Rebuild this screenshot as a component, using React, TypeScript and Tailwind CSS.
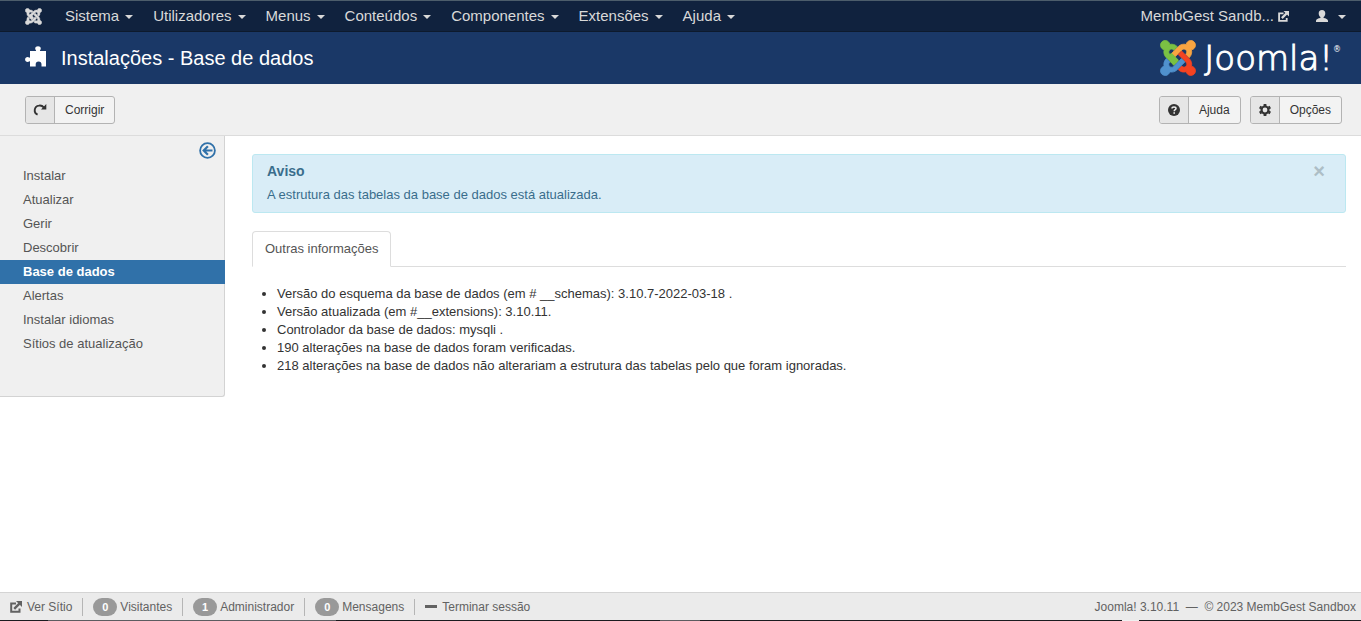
import React from "react";

const menus = [
  "Sistema",
  "Utilizadores",
  "Menus",
  "Conteúdos",
  "Componentes",
  "Extensões",
  "Ajuda",
];

const sidebarLinks = [
  "Instalar",
  "Atualizar",
  "Gerir",
  "Descobrir",
  "Base de dados",
  "Alertas",
  "Instalar idiomas",
  "Sítios de atualização",
];

const details = [
  "Versão do esquema da base de dados (em # __schemas): 3.10.7-2022-03-18 .",
  "Versão atualizada (em #__extensions): 3.10.11.",
  "Controlador da base de dados: mysqli .",
  "190 alterações na base de dados foram verificadas.",
  "218 alterações na base de dados não alterariam a estrutura das tabelas pelo que foram ignoradas.",
];

const counters = [
  { count: 0, label: "Visitantes" },
  { count: 1, label: "Administrador" },
  { count: 0, label: "Mensagens" },
];

type MarkProps = { className: string; colors: string[] };

const JoomlaMark = ({ className, colors }: MarkProps) => (
  <svg viewBox="-6 26 460 460" className={className} strokeWidth="10" aria-hidden="true">
    <path
      fill={colors[0]}
      stroke={colors[0]}
      d="M.6 92.1C.6 58.8 27.4 32 60.4 32c30 0 54.5 21.9 59.2 50.2 32.6-7.6 67.1.6 96.5 30l-44.3 44.3c-20.5-20.5-42.6-16.3-55.4-3.5-14.3 14.3-14.3 37.9 0 52.2l99.5 99.5-44 44.3c-87.7-87.2-49.7-49.7-99.8-99.7-26.8-26.5-35-64.8-24.8-98.9C20.4 144.6.6 120.7.6 92.1z"
    />
    <path
      fill={colors[1]}
      stroke={colors[1]}
      d="M130.1 208.5l44.3 44.3c10-10 89.7-89.7 99.7-99.8 14.3-14.3 37.6-14.3 51.9 0 12.8 12.8 17 35-3.5 55.4l44 44.3c31.2-31.2 38.5-67.6 28.9-101.2 29.2-4.1 51.9-29.2 51.9-59.5 0-33.2-26.8-60.1-59.8-60.1-30.3 0-55.4 22.5-59.5 51.6-33.8-9.9-71.7-1.5-98.3 25.1-18.3 19.1-71.1 71.5-99.6 99.9z"
    />
    <path
      fill={colors[2]}
      stroke={colors[2]}
      d="M396.4 360.7c8.2-32.7-.9-68.5-26.3-93.9-11.8-12.2 5 4.7-99.5-99.7l-44.3 44.3 99.7 99.7c14.3 14.3 14.3 37.6 0 51.9-12.8 12.8-35 17-55.4-3.5l-44 44.3c27.6 30.2 68 38.8 102.7 28 5.5 27.4 29.7 48.1 58.9 48.1 33 0 59.8-26.8 59.8-60.1 0-30.2-22.5-55-51.6-59.1z"
    />
    <path
      fill={colors[3]}
      stroke={colors[3]}
      d="M312.1 307.6l-44-44.3c-87 86.4-50.4 50.4-99.7 99.8-14.3 14.3-37.6 14.3-51.9 0-13.1-13.4-16.9-35.3 3.2-55.4l-44-44.3c-30.2 30.2-38 65.2-29.5 98.3-26.7 6-46.2 29.9-46.2 58.2C0 453.2 26.8 480 59.8 480c28.6 0 52.5-19.8 58.6-46.7 32.7 8.2 68.5-.6 94.2-26 32.1-32 12.2-12.4 99.5-99.7z"
    />
    {/* green arm crosses back over the orange one */}
    <path d="M120 209l96 96" stroke={colors[0]} strokeWidth="58" fill="none" />
  </svg>
);

const PuzzleIcon = () => (
  <svg viewBox="0 0 22 21" className="mb-1 h-[21px] w-[22px]" fill="#fff" aria-hidden="true">
    <path d="M5 5h5.500c.5 0 .7-.4.5-.8-.5-.5-.8-.9-.8-1.600C10.200 1 11.500.2 13 .2s2.800.8 2.800 2.400c0 .7-.3 1.100-.8 1.600-.2.400 0 .8.5.8H21v15.500h-4.500v-2.200c0-1.700-1-2.800-2.900-2.800s-2.900 1.100-2.900 2.800v2.200H5v-4.700c0-.5-.5-.6-.9-.3-.4.300-.9.500-1.400.5C1.100 16 .1 14.900.1 13.500S1.100 11 2.700 11c.5 0 1 .2 1.400.5.400.3.900.2.900-.3z" />
  </svg>
);

const ExternalIcon = ({ className }: { className: string }) => (
  <svg viewBox="0 0 12 12" className={className} fill="none" stroke="currentColor" aria-hidden="true">
    <path strokeWidth="2" d="M6 2.500H1.200v8.300h8.300V7.500" />
    <path strokeWidth="2.400" d="M4.200 7.800l5.200-5.200" />
    <path fill="currentColor" stroke="none" d="M6 0h6v6z" />
  </svg>
);

const UserIcon = () => (
  <svg viewBox="0 0 12 12" className="size-3" fill="currentColor" aria-hidden="true">
    <path d="M6 0c2.200 0 3.300 1.400 3.300 3.400 0 1.500-.7 2.900-1.700 3.600v1c2.300.3 4.400 1.200 4.400 2.700V12H0v-1.300C0 9.200 2.100 8.300 4.400 8V7C3.400 6.300 2.700 4.900 2.700 3.400 2.700 1.400 3.800 0 6 0z" />
  </svg>
);

const RefreshIcon = () => (
  <svg viewBox="0 0 14 14" className="size-3.5" aria-hidden="true">
    <path d="M4.600 11.600A4.700 4.700 0 0 1 5.900 2.600Q8.800 2 11 4.600" fill="none" stroke="#333" strokeWidth="1.900" />
    <path d="M13.300 1v5.500H8z" fill="#333" />
  </svg>
);

const HelpIcon = () => (
  <svg viewBox="0 0 12 12" className="size-3" aria-hidden="true">
    <circle cx="6" cy="6" r="6" fill="#333" />
    <path d="M4 4.600C4 2.600 8 2.600 8 4.600 8 5.800 6.200 5.700 6.200 7.200" fill="none" stroke="#eee" strokeWidth="1.500" />
    <path d="M5.400 8.200h1.600v1.500H5.400z" fill="#eee" />
  </svg>
);

const GearIcon = () => (
  <svg viewBox="0 0 12 12" className="size-3" aria-hidden="true">
    <circle cx="6" cy="6" r="3.500" fill="none" stroke="#333" strokeWidth="2.200" />
    <path
      d="M6 0v2M6 10v2M.7 3l1.700 1M9.600 8l1.700 1M.7 9l1.700-1M9.600 4l1.700-1"
      stroke="#333"
      strokeWidth="2.800"
    />
  </svg>
);

const CollapseIcon = () => (
  <svg viewBox="0 0 17 17" className="size-[17px]" fill="none" stroke="#3071a9" aria-hidden="true">
    <circle cx="8.500" cy="8.500" r="7.400" strokeWidth="1.800" />
    <path d="M13.500 8.500H5M8.900 4.300L4.700 8.500l4.200 4.200" strokeWidth="2.200" />
  </svg>
);

const Caret = () => (
  <span className="mt-0.5 border-x-4 border-t-4 border-x-transparent border-t-current" />
);

type ToolButtonProps = { icon: React.ReactNode; label: string };

const ToolButton = ({ icon, label }: ToolButtonProps) => (
  <button
    type="button"
    className="flex h-7 overflow-hidden rounded-[3px] border border-[#b3b3b3] bg-[#f3f3f3] text-xs text-[#333]"
  >
    <span className="flex h-full w-[29px] items-center justify-center border-r border-[#b3b3b3] bg-[#e6e6e6]">
      {icon}
    </span>
    <span className="flex h-full items-center px-2.5">{label}</span>
  </button>
);

const Navbar = () => (
  <nav className="flex h-8 items-center border-t border-b border-t-[#4c5d6b] border-b-[#0d1a2d] bg-[#10223e] pr-[15px] pl-[25px] text-[15px] text-[#d9d9d9]">
    <a href="#" aria-label="Joomla" className="mr-[23px]">
      <JoomlaMark className="size-[17px]" colors={["#d9d9d9", "#d9d9d9", "#d9d9d9", "#d9d9d9"]} />
    </a>
    <div className="flex gap-5">
      {menus.map((menu) => (
        <a key={menu} href="#" className="flex items-center gap-1.5">
          {menu}
          <Caret />
        </a>
      ))}
    </div>
    <div className="ml-auto flex items-center">
      <a href="#" className="flex items-center gap-1">
        MembGest Sandb...
        <ExternalIcon className="size-[11px]" />
      </a>
      <a href="#" aria-label="Utilizador" className="ml-[27px] flex items-center gap-2.5">
        <UserIcon />
        <Caret />
      </a>
    </div>
  </nav>
);

const Header = () => (
  <header className="flex h-13 items-center bg-[#1a3867] pr-5 pl-[25px] text-white">
    <PuzzleIcon />
    <h1 className="ml-3.5 text-xl">Instalações - Base de dados</h1>
    <div className="ml-auto flex items-center gap-2">
      <JoomlaMark className="size-9" colors={["#7ac143", "#f9a541", "#f44321", "#5091cd"]} />
      <div className="flex items-start font-['DejaVu_Sans',sans-serif]">
        <span className="text-[34px] leading-9 font-extralight [-webkit-text-stroke:1px_white]">
          Joomla!
        </span>
        <span className="text-[8px] leading-5">®</span>
      </div>
    </div>
  </header>
);

const Sidebar = () => (
  <aside className="w-[225px] shrink-0 self-start rounded-br-[3px] border-r border-b border-[#d3d3d3] bg-[#f0f0f0] pb-10">
    <div className="flex justify-end pt-1.5 pr-2">
      <button type="button" aria-label="Ocultar barra lateral" className="h-[17px]">
        <CollapseIcon />
      </button>
    </div>
    <ul className="mt-[5px]">
      {sidebarLinks.map((link) => (
        <li key={link}>
          <a
            href="#"
            className={
              link === "Base de dados"
                ? "-mr-px block bg-[#3071a9] pl-[23px] leading-6 font-bold text-white"
                : "block pl-[23px] leading-6 text-[#555]"
            }
          >
            {link}
          </a>
        </li>
      ))}
    </ul>
  </aside>
);

const Footer = () => (
  <footer className="flex h-[28px] items-center justify-between border-t border-[#d4d4d4] bg-[#ebebeb] pr-[5px] pl-2.5 text-xs text-[#626262]">
    <div className="flex items-center">
      <a href="#" className="flex items-center gap-[5px]">
        <ExternalIcon className="size-3" />
        Ver Sítio
      </a>
      {counters.map(({ count, label }) => (
        <div key={label} className="ml-2.5 flex items-center gap-[3px] border-l border-[#b5b5b5] pl-2.5">
          <span className="w-6 rounded-full bg-[#999] text-center text-[11px] leading-[18px] font-bold text-white">
            {count}
          </span>
          {label}
        </div>
      ))}
      <a href="#" className="ml-2.5 flex items-center gap-[5px] border-l border-[#b5b5b5] pl-2.5">
        <span className="h-[3px] w-3 bg-[#626262]" />
        Terminar sessão
      </a>
    </div>
    <p>Joomla! 3.10.11 &nbsp;—&nbsp; © 2023 MembGest Sandbox</p>
  </footer>
);

const App = () => (
  <div className="flex min-h-screen flex-col bg-white font-['Liberation_Sans',Arial,sans-serif] text-[13px] leading-[18px] text-[#333]">
    <Navbar />
    <Header />
    <div className="flex h-13 items-center justify-between border-b border-[#dcdcdc] bg-[#f0f0f0] pr-[19px] pl-[25px]">
      <ToolButton icon={<RefreshIcon />} label="Corrigir" />
      <div className="flex gap-[9px]">
        <ToolButton icon={<HelpIcon />} label="Ajuda" />
        <ToolButton icon={<GearIcon />} label="Opções" />
      </div>
    </div>
    <div className="flex flex-1">
      <Sidebar />
      <main className="flex-1 pt-[18px] pr-[15px] pl-[27px]">
        <div className="flex items-start justify-between rounded-[3px] border border-[#bce8f1] bg-[#d9edf7] px-3.5 pt-[7px] pb-2 text-[#3a6d8c]">
          <div>
            <h4 className="text-sm leading-[18px] font-bold">Aviso</h4>
            <p className="mt-1.5">A estrutura das tabelas da base de dados está atualizada.</p>
          </div>
          <button type="button" aria-label="Fechar" className="mr-1.5 text-xl leading-[18px] font-bold text-[#adbec6]">
            ×
          </button>
        </div>
        <div role="tablist" className="mt-[18px] flex border-b border-[#ddd]">
          <button
            type="button"
            role="tab"
            aria-selected="true"
            className="-mb-px rounded-t-[4px] border border-[#ddd] border-b-white bg-white px-3 py-2 text-[#555]"
          >
            Outras informações
          </button>
        </div>
        <ul className="mt-[18px] list-disc pl-[25px]">
          {details.map((detail) => (
            <li key={detail}>{detail}</li>
          ))}
        </ul>
      </main>
    </div>
    <Footer />
    <div className="flex h-px bg-[#1b1b1f]">
      <span className="w-12" />
      <span className="w-72 bg-[#5c5c60]" />
      <span className="ml-81 w-10 bg-[#5c5c60]" />
      <span className="mr-[222px] ml-auto w-[17px] bg-[#f0f0f0]" />
    </div>
  </div>
);

export default App;
